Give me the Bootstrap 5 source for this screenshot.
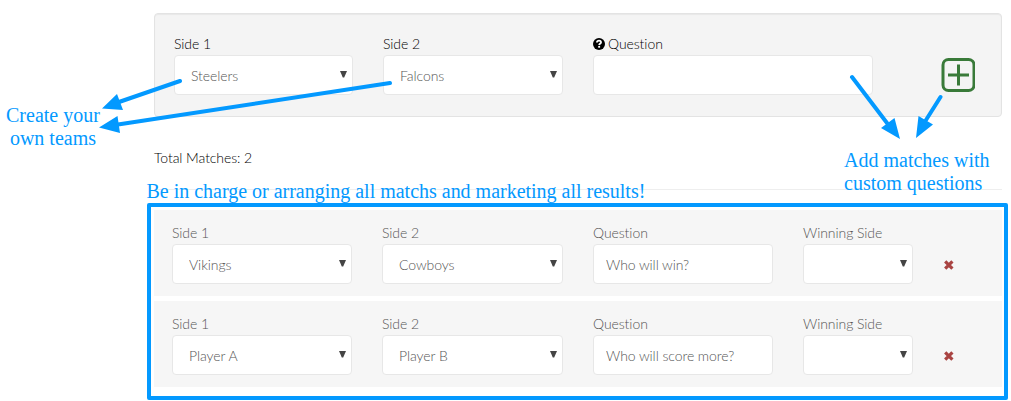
<!DOCTYPE html>
<html lang="en">
<head>
<meta charset="utf-8">
<meta name="viewport" content="width=device-width, initial-scale=1">
<title>Matches</title>
<link href="https://cdn.jsdelivr.net/npm/bootstrap@5.3.0/dist/css/bootstrap.min.css" rel="stylesheet">
<style>
body{font-family:Lato,sans-serif;font-weight:300;font-size:14px;line-height:20px;letter-spacing:-.07px;font-variant-ligatures:none;color:#000;background:#fff;height:401px;overflow:hidden}
.page{width:848px;margin-left:154px;padding-top:13px}
.well-box{height:104px;background:#f4f4f4;border:1px solid #e3e3e3;box-shadow:inset 0 1px 1px rgba(0,0,0,.05);padding:20px 19px}
.add-grid{display:grid;grid-template-columns:179px 180px 280px 1fr;column-gap:30px}
.match-grid{display:grid;grid-template-columns:180px 181px 180px 110px 1fr;column-gap:30px}
.field-label{display:block;height:21px;line-height:20px;white-space:nowrap}
.form-control,.form-select{height:40px;font-size:14px;font-weight:300;line-height:20px;letter-spacing:inherit;color:#555;border:1px solid #e7e7e7;border-radius:4px;background:#fff;padding:8px 12px 6px}
.form-control{padding:7px 12px}
.form-select{padding-left:16px}
.caret-mark{right:6px;top:16px;width:7px;height:7px}
.total{margin-top:31px;height:20px}
.rule{height:1px;background:#eee;margin-top:21px}
.frame{margin:13px -6px 0 -7px;height:197px;border:4px solid #0399ff;border-radius:2px;padding:3px 2px 0 3px}
.match-row{height:86px;background:#f6f6f6;padding:13px 18px 0;margin-bottom:5px;color:#555}
.remove-btn{margin:36px 0 0;width:12px;height:12px}
.note{font-family:"Liberation Serif",serif;font-weight:400;font-size:20px;line-height:23px;letter-spacing:0;color:#0399ff;white-space:nowrap}
.note-teams{left:6px;top:104px}
.note-add{left:844px;top:149px}
.note-charge{left:146.500px;top:180px;letter-spacing:-.01px}
</style>
</head>
<body class="position-relative">
<main class="page">
  <section class="well-box rounded-1">
    <div class="add-grid">
      <div><label class="field-label" for="s1">Side 1</label><div class="position-relative"><select id="s1" class="form-select"><option>Steelers</option></select><svg class="caret-mark position-absolute" viewBox="0 0 7 7"><path d="M0 0h7L4.200 6.500H2.800z" fill="#444"/></svg></div></div>
      <div><label class="field-label" for="s2">Side 2</label><div class="position-relative"><select id="s2" class="form-select"><option>Falcons</option></select><svg class="caret-mark position-absolute" viewBox="0 0 7 7"><path d="M0 0h7L4.200 6.500H2.800z" fill="#444"/></svg></div></div>
      <div><label class="field-label d-flex" for="q"><svg class="flex-shrink-0" style="margin:4px 3px 0 0" width="12" height="12" viewBox="0 0 12 12"><circle cx="6" cy="6" r="6"/><path d="M3.9 4.5C4.1 1.900 8.100 2 8 4.400C8 5.700 6.300 5.500 6.200 7.100" fill="none" stroke="#fff" stroke-width="1.800"/><path d="M5.200 8h1.900v1.700H5.200z" fill="#fff"/></svg>Question</label><input id="q" class="form-control"></div>
      <div class="d-flex justify-content-end"><a href="#" class="d-block" aria-label="Add match"><svg class="d-block" style="margin:24px 7px 0 0" width="34" height="34" viewBox="0 0 34 34" fill="none" stroke="#397a39"><rect x="2" y="1.500" width="31" height="31" rx="5.500" stroke-width="3"/><path d="M7 17h21M17.500 6.500v21" stroke-width="3"/></svg></a></div>
    </div>
  </section>
  <div class="total">Total Matches: 2</div>
  <div class="rule"></div>
  <section class="frame">
    <div class="match-row"><div class="match-grid">
      <div><label class="field-label" for="a1">Side 1</label><div class="position-relative"><select id="a1" class="form-select"><option>Vikings</option></select><svg class="caret-mark position-absolute" viewBox="0 0 7 7"><path d="M0 0h7L4.200 6.500H2.800z" fill="#444"/></svg></div></div>
      <div><label class="field-label" for="a2">Side 2</label><div class="position-relative"><select id="a2" class="form-select"><option>Cowboys</option></select><svg class="caret-mark position-absolute" viewBox="0 0 7 7"><path d="M0 0h7L4.200 6.500H2.800z" fill="#444"/></svg></div></div>
      <div><label class="field-label" for="a3">Question</label><input id="a3" class="form-control" value="Who will win?"></div>
      <div><label class="field-label" for="a4">Winning Side</label><div class="position-relative"><select id="a4" class="form-select"><option></option></select><svg class="caret-mark position-absolute" viewBox="0 0 7 7"><path d="M0 0h7L4.200 6.500H2.800z" fill="#444"/></svg></div></div>
      <div><svg class="remove-btn d-block" viewBox="0 0 12 12"><path d="M2.200 2.400l7.200 7.200M9.400 2.400L2.200 9.600" stroke="#a94442" stroke-width="3.200"/></svg></div>
    </div></div>
    <div class="match-row"><div class="match-grid">
      <div><label class="field-label" for="b1">Side 1</label><div class="position-relative"><select id="b1" class="form-select"><option>Player A</option></select><svg class="caret-mark position-absolute" viewBox="0 0 7 7"><path d="M0 0h7L4.200 6.500H2.800z" fill="#444"/></svg></div></div>
      <div><label class="field-label" for="b2">Side 2</label><div class="position-relative"><select id="b2" class="form-select"><option>Player B</option></select><svg class="caret-mark position-absolute" viewBox="0 0 7 7"><path d="M0 0h7L4.200 6.500H2.800z" fill="#444"/></svg></div></div>
      <div><label class="field-label" for="b3">Question</label><input id="b3" class="form-control" value="Who will score more?"></div>
      <div><label class="field-label" for="b4">Winning Side</label><div class="position-relative"><select id="b4" class="form-select"><option></option></select><svg class="caret-mark position-absolute" viewBox="0 0 7 7"><path d="M0 0h7L4.200 6.500H2.800z" fill="#444"/></svg></div></div>
      <div><svg class="remove-btn d-block" viewBox="0 0 12 12"><path d="M2.200 2.400l7.200 7.200M9.400 2.400L2.200 9.600" stroke="#a94442" stroke-width="3.200"/></svg></div>
    </div></div>
  </section>
</main>
<!-- callouts over the form -->
<div class="note note-teams position-absolute text-center">Create your<br>own teams</div>
<div class="note note-add position-absolute">Add matches with<br>custom questions</div>
<div class="note note-charge position-absolute">Be in charge or arranging all matchs and marketing all results!</div>
<svg class="position-absolute top-0 start-0 pe-none" width="1011" height="401" viewBox="0 0 1011 401" fill="#0399ff" stroke="#0399ff">
  <g stroke-width="4" stroke-linecap="round"><path d="M180 81L119 102M390 83L118 124.500M852 77L887 123M940.500 97L926 120"/></g>
  <g stroke="none"><path d="M102 108.500L117 94L123 110zM99 127.500L117.500 116L120 133zM900 139L881 128L894.500 118zM916 138L918.500 116L933 124.500z"/></g>
</svg>
<script src="https://cdn.jsdelivr.net/npm/bootstrap@5.3.0/dist/js/bootstrap.bundle.min.js"></script>
</body>
</html>
